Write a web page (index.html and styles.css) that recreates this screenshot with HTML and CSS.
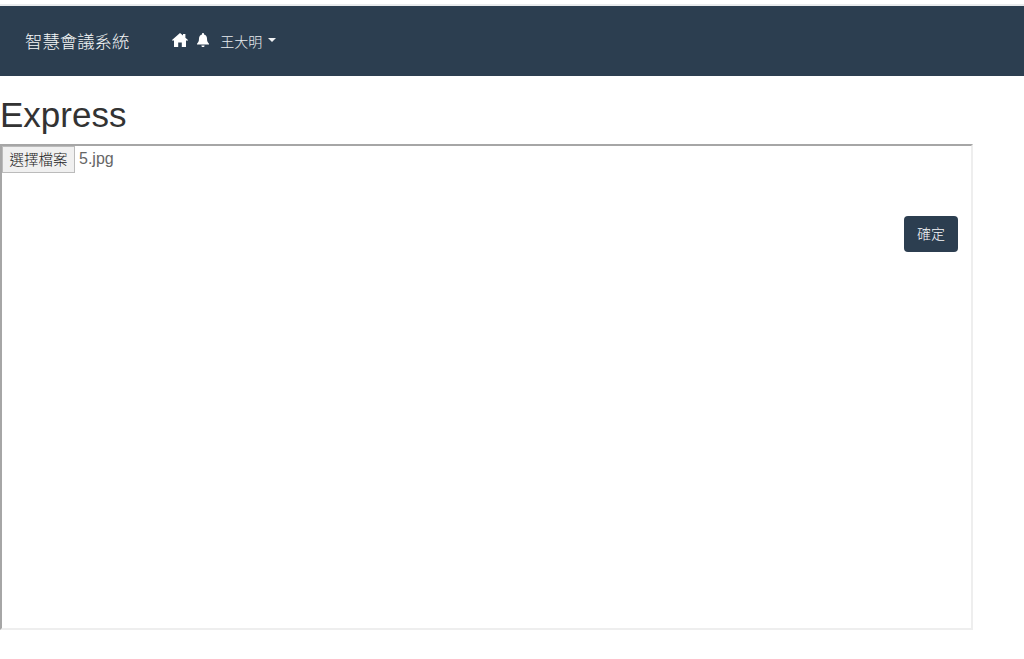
FILE: index.html
```html
<!DOCTYPE html>
<html lang="zh-Hant">
<head>
<meta charset="utf-8">
<title>智慧會議系統</title>
<link rel="stylesheet" href="styles.css">
</head>
<body>
<div class="top-strip"></div>
<nav class="navbar">
  <a class="brand" href="#">智慧會議系統</a>
  <div class="nav-items">
    <svg class="icon-home" viewBox="0 0 16 14" aria-hidden="true"><path d="M8 0 L11 2.6 L11 1 L13.4 1 L13.4 4.7 L16 7 L16 7.6 L14 7.6 L14 14 L9.8 14 L9.8 9.5 L6.2 9.5 L6.2 14 L2 14 L2 7.6 L0 7.6 L0 7 Z"/></svg>
    <svg class="icon-bell" viewBox="0 0 12 14" aria-hidden="true"><path d="M6 0 C6.6 0 7 .4 7 1 L7 1.4 C9 1.9 10 3.5 10 5.6 C10 8.6 10.8 9.6 12 10.8 L12 11.4 L0 11.4 L0 10.8 C1.2 9.6 2 8.6 2 5.6 C2 3.5 3 1.9 5 1.4 L5 1 C5 .4 5.4 0 6 0 Z M4.4 12.4 L7.6 12.4 C7.6 13.4 6.9 14 6 14 C5.1 14 4.4 13.4 4.4 12.4 Z"/></svg>
    <span class="user">王大明</span>
    <span class="caret"></span>
  </div>
</nav>
<main>
  <h1 class="title">Express</h1>
  <section class="frame">
    <div class="file-row">
      <button class="file-btn" type="button">選擇檔案</button>
      <span class="file-name">5.jpg</span>
    </div>
    <div class="actions">
      <button class="submit" type="button">確定</button>
    </div>
  </section>
</main>
</body>
</html>
```
FILE: styles.css
```css
* { box-sizing: border-box; }
html, body { margin: 0; padding: 0; height: 100%; }
body {
  background: #fff;
  color: #333;
  font-family: "Liberation Sans", "Noto Sans CJK TC", sans-serif;
}
.top-strip {
  height: 6px;
  border-top: 4px solid #fff;
  background: #e9ebed;
}
.navbar {
  display: flex;
  align-items: center;
  height: 70px;
  background: #2c3e50;
  padding-left: 25px;
  color: #fff;
}
.brand {
  color: #f4f6f7;
  text-decoration: none;
  font-size: 17.4px;
  line-height: 24px;
  font-family: "Noto Sans CJK TC", sans-serif;
  font-weight: 300;
}
.nav-items {
  display: flex;
  align-items: center;
  margin-left: 43px;
  margin-top: -2px;
}
.icon-home { width: 16px; height: 14px; fill: #fff; }
.icon-bell { width: 12px; height: 14px; fill: #fff; margin-left: 9px; }
.user {
  font-family: "Noto Sans CJK TC", sans-serif;
  font-weight: 300;
  font-size: 14px;
  color: #e9ecef;
  margin-left: 11px;
  line-height: 20px;
  margin-top: 1px;
}
.caret {
  width: 0;
  height: 0;
  margin-left: 6px;
  margin-top: -1px;
  border-left: 4px solid transparent;
  border-right: 4px solid transparent;
  border-top: 4px solid #f0f2f4;
}
.title {
  margin: 0;
  padding-top: 20px;
  height: 68px;
  font-size: 35px;
  line-height: 38px;
  font-weight: 400;
  color: #333;
}
.frame {
  width: 973px;
  height: 486px;
  border-style: solid;
  border-width: 2px;
  border-color: #a6a6a6 #eeeeee #eeeeee #a6a6a6;
}
.file-row {
  display: flex;
  align-items: flex-start;
  height: 27px;
}
.file-btn {
  width: 73px;
  height: 27px;
  padding: 0 0 3px;
  border: 1px solid #bbbbbb;
  background: #f0f0f0;
  color: #222;
  font-family: "Noto Sans CJK TC", sans-serif;
  font-size: 14.5px;
  font-weight: 300;
}
.file-name {
  margin-left: 4px;
  font-size: 16px;
  line-height: 26px;
  color: #666;
}
.actions {
  display: flex;
  justify-content: flex-end;
  padding: 43px 13px 0 0;
}
.submit {
  width: 54px;
  height: 36px;
  padding: 0 0 3px;
  border: 0;
  border-radius: 4px;
  background: #2c3e50;
  color: #f8f9fa;
  font-family: "Noto Sans CJK TC", sans-serif;
  font-size: 14px;
  font-weight: 300;
}
```
